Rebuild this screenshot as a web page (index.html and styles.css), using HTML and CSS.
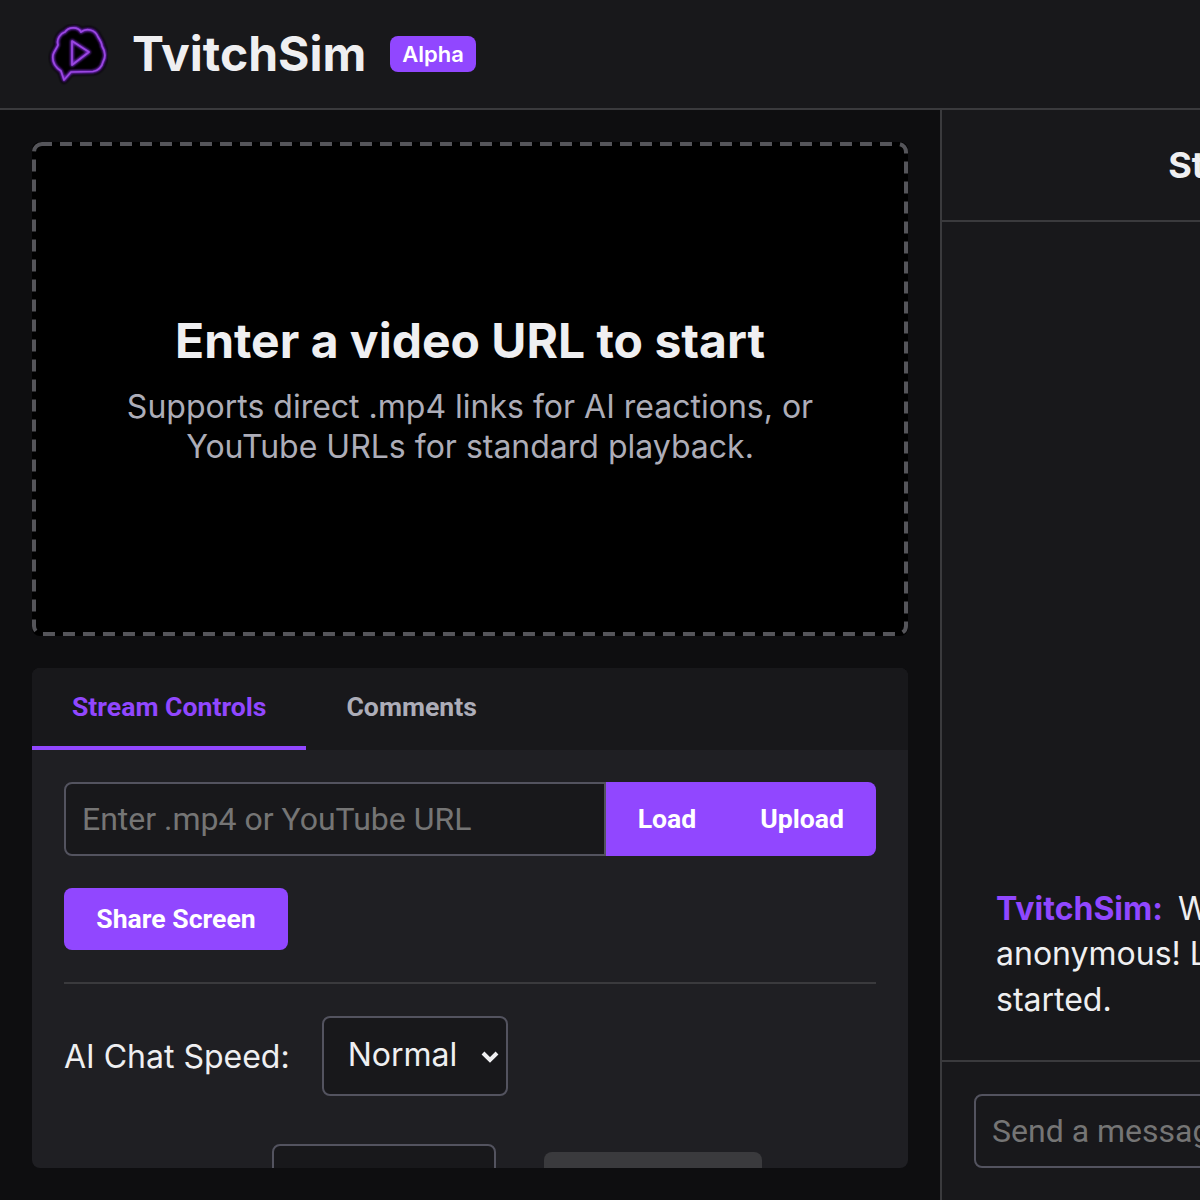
FILE: index.html
```html
<!DOCTYPE html>
<html lang="en">
<head>
  <meta charset="UTF-8">
  <title>TvitchSim</title>
  <link rel="stylesheet" href="styles.css">
</head>
<body>
  <div class="app">
    <header class="top-bar">
      <svg class="logo" viewBox="0 0 60 64" width="60" height="64">
        <defs>
          <filter id="glow" x="-30%" y="-30%" width="160%" height="160%">
            <feGaussianBlur stdDeviation="1.1"/>
          </filter>
          <filter id="soft" x="-30%" y="-30%" width="160%" height="160%">
            <feGaussianBlur stdDeviation="0.8"/>
          </filter>
        </defs>
        <path class="logo-blob" filter="url(#soft)" d="M16 56 L13 47 C7 43 4 37 5 31 C6 27 9 24 10 21 C8 15 13 9 17 8 C20 3 30 2 33 8 C38 4 47 5 50 13 C52 16 54 19 54 22 C57 27 58 33 55 38 C54 43 50 47 45 47.500 L23 48 Z"/>
        <g class="logo-glow" filter="url(#glow)">
          <path d="M16 56 L13 47 C7 43 4 37 5 31 C6 27 9 24 10 21 C8 15 13 9 17 8 C20 3 30 2 33 8 C38 4 47 5 50 13 C52 16 54 19 54 22 C57 27 58 33 55 38 C54 43 50 47 45 47.500 L23 48 Z"/>
          <path d="M24 17 L41 28 L24 41 Z"/>
        </g>
        <g class="logo-line">
          <path d="M16 56 L13 47 C7 43 4 37 5 31 C6 27 9 24 10 21 C8 15 13 9 17 8 C20 3 30 2 33 8 C38 4 47 5 50 13 C52 16 54 19 54 22 C57 27 58 33 55 38 C54 43 50 47 45 47.500 L23 48 Z"/>
          <path d="M24 17 L41 28 L24 41 Z"/>
        </g>
      </svg>
      <h1 class="brand">TvitchSim</h1>
      <span class="badge">Alpha</span>
    </header>

    <div class="main">
      <section class="stage">
        <div class="video-box">
          <svg class="video-dash" viewBox="0 0 876 494" width="876" height="494">
            <rect x="2" y="2" width="872" height="490" rx="8" ry="8"/>
          </svg>
          <h2>Enter a video URL to start</h2>
          <p>Supports direct .mp4 links for AI reactions, or YouTube URLs for standard playback.</p>
        </div>

        <div class="panel">
          <div class="tabs">
            <button class="tab active">Stream Controls</button>
            <button class="tab">Comments</button>
          </div>
          <div class="panel-body">
            <div class="url-row">
              <input class="url-input" type="text" placeholder="Enter .mp4 or YouTube URL">
              <div class="url-buttons">
                <button class="btn">Load</button>
                <button class="btn">Upload</button>
              </div>
            </div>
            <button class="btn share-btn">Share Screen</button>
            <hr class="divider">
            <div class="speed-row">
              <label for="speed">AI Chat Speed:</label>
              <select id="speed" class="speed-select">
                <option>Normal</option>
                <option>Fast</option>
                <option>Slow</option>
              </select>
            </div>
            <div class="extra-row">
              <div class="extra-select"></div>
              <div class="extra-btn"></div>
            </div>
          </div>
        </div>
      </section>

      <aside class="chat">
        <div class="chat-title">Stream Chat</div>
        <div class="chat-log">
          <p class="chat-msg"><span class="chat-user">TvitchSim:</span> Welcome to the stream,<br>anonymous! Let's get this party<br>started.</p>
        </div>
        <div class="chat-send">
          <input class="chat-input" type="text" placeholder="Send a message">
        </div>
      </aside>
    </div>
  </div>
</body>
</html>
```

FILE: styles.css
```css
html, body {
  margin: 0;
  height: 100%;
  overflow: hidden;
  background-color: #0e0e10;
}

body {
  font-family: Inter, sans-serif;
  color: #efeff1;
}

.app {
  width: 1612px;
  height: 1200px;
  display: flex;
  flex-direction: column;
}

.top-bar {
  height: 108px;
  flex: none;
  display: flex;
  align-items: center;
  padding: 0 48px;
  background-color: #18181b;
  border-bottom: 2px solid #3a3a3d;
}

.logo {
  flex: none;
  margin-top: 4px;
}

.logo-blob {
  fill: #030304;
  stroke: #030304;
  stroke-width: 7;
  stroke-linejoin: round;
}

.logo-glow path {
  fill: none;
  stroke: #7428c4;
  stroke-width: 3.5;
  stroke-linejoin: round;
}

.logo-line path {
  fill: none;
  stroke: #9a48e0;
  stroke-width: 1.7;
  stroke-linejoin: round;
}

.brand {
  margin: 0 24px;
  font-size: 48px;
  font-weight: 700;
  line-height: 56px;
}

.badge {
  height: 36px;
  line-height: 36px;
  padding: 0 12px;
  border-radius: 8px;
  background-color: #9147ff;
  color: #fff;
  font-size: 22px;
  font-weight: 600;
}

.main {
  flex: 1;
  min-height: 0;
  display: flex;
}

.stage {
  width: 940px;
  flex: none;
  box-sizing: border-box;
  padding: 32px;
  display: flex;
  flex-direction: column;
  gap: 32px;
}

.video-box {
  position: relative;
  height: 494px;
  flex: none;
  box-sizing: border-box;
  display: flex;
  flex-direction: column;
  align-items: center;
  justify-content: center;
  background-color: #000;
  border-radius: 8px;
  text-align: center;
}

.video-dash {
  position: absolute;
  top: 0;
  left: 0;
}

.video-dash rect {
  fill: none;
  stroke: #55555a;
  stroke-width: 4;
  stroke-dasharray: 12 8;
  stroke-dashoffset: 2;
}

.video-box h2 {
  margin: 0 0 17px;
  font-size: 48px;
  font-weight: 700;
  line-height: 58px;
}

.video-box p {
  margin: 0;
  max-width: 720px;
  font-size: 32px;
  line-height: 40px;
  color: #adadb8;
}

.panel {
  flex: 1;
  min-height: 0;
  overflow: hidden;
  background-color: #1f1f23;
  border-radius: 8px;
}

.tabs {
  height: 82px;
  display: flex;
  background-color: #18181b;
}

.tab {
  padding: 0 40px 2px;
  background: none;
  border: none;
  border-bottom: 4px solid transparent;
  color: #adadb8;
  font-family: Roboto, sans-serif;
  font-size: 26.6px;
  font-weight: 700;
}

.tab.active {
  color: #9147ff;
  border-bottom-color: #9147ff;
}

.panel-body {
  padding: 32px;
}

.url-row {
  display: flex;
  height: 74px;
}

.url-input, .chat-input {
  box-sizing: border-box;
  padding: 0 16px;
  background-color: #18181b;
  border: 2px solid #53535f;
  color: #efeff1;
  font-family: Roboto, sans-serif;
  font-size: 32px;
}

.url-input::placeholder, .chat-input::placeholder {
  color: #757575;
  opacity: 1;
}

.url-input {
  flex: 1;
  min-width: 0;
  border-radius: 8px 0 0 8px;
}

.url-buttons {
  display: flex;
  border-radius: 0 8px 8px 0;
  overflow: hidden;
}

.btn {
  padding: 0 32px 2px;
  background-color: #9147ff;
  border: none;
  border-radius: 8px;
  color: #fff;
  font-family: Roboto, sans-serif;
  font-size: 26.6px;
  font-weight: 700;
}

.url-buttons .btn {
  border-radius: 0;
}

.share-btn {
  display: block;
  width: 224px;
  height: 62px;
  margin-top: 32px;
  padding: 0 0 2px;
}

.divider {
  height: 2px;
  margin: 32px 0;
  background-color: #3a3a3d;
  border: none;
}

.speed-row {
  display: flex;
  align-items: center;
  gap: 32px;
  font-size: 32px;
}

.speed-select {
  width: 186px;
  height: 80px;
  padding: 0 24px 3px;
  appearance: none;
  background-color: #18181b;
  background-image: url("data:image/svg+xml,%3Csvg xmlns='http://www.w3.org/2000/svg' width='18' height='13' viewBox='0 0 18 13'%3E%3Cpath d='M2 3l7 7 7-7' fill='none' stroke='%23efeff1' stroke-width='4'/%3E%3C/svg%3E");
  background-repeat: no-repeat;
  background-position: right 7px center;
  border: 2px solid #53535f;
  border-radius: 8px;
  color: #efeff1;
  font-family: Inter, sans-serif;
  font-size: 32px;
}

.extra-row {
  display: flex;
  align-items: center;
  gap: 48px;
  margin-top: 48px;
  padding-left: 208px;
}

.extra-select {
  width: 224px;
  height: 80px;
  box-sizing: border-box;
  background-color: #18181b;
  border: 2px solid #53535f;
  border-radius: 8px;
}

.extra-btn {
  width: 218px;
  height: 64px;
  background-color: #3a3a3d;
  border-radius: 8px;
}

.chat {
  width: 672px;
  flex: none;
  box-sizing: border-box;
  display: flex;
  flex-direction: column;
  background-color: #18181b;
  border-left: 2px solid #3a3a3d;
}

.chat-title {
  height: 110px;
  flex: none;
  display: flex;
  align-items: center;
  justify-content: center;
  border-bottom: 2px solid #3a3a3d;
  font-size: 36px;
  font-weight: 700;
}

.chat-log {
  flex: 1;
  min-height: 0;
  display: flex;
  flex-direction: column;
  justify-content: flex-end;
  padding: 0 54px 38px;
}

.chat-msg {
  margin: 0;
  font-size: 32px;
  line-height: 45.5px;
}

.chat-user {
  margin-right: 6px;
  color: #9147ff;
  font-weight: 700;
}

.chat-send {
  flex: none;
  height: 140px;
  box-sizing: border-box;
  padding: 32px;
  border-top: 2px solid #3a3a3d;
}

.chat-input {
  display: block;
  width: 100%;
  height: 74px;
  border-radius: 8px;
}
```
